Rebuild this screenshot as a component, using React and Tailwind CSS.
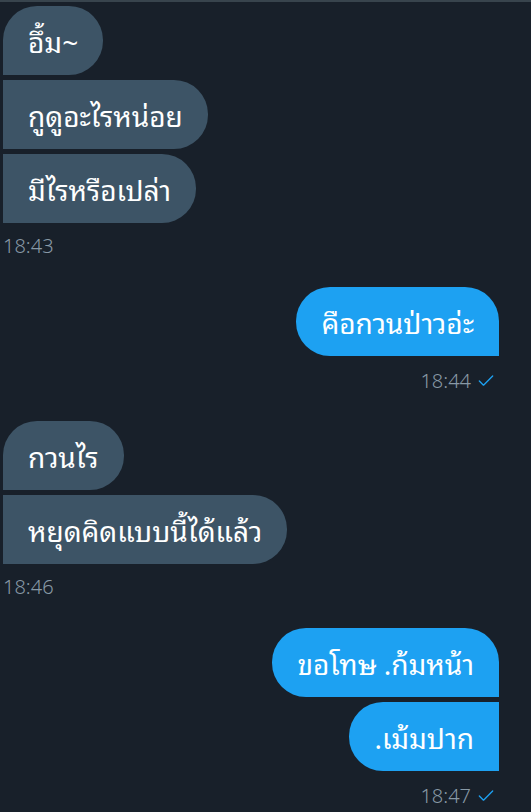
import { Check } from "lucide-react";

const font = {
  fontFamily:
    '"Noto Sans Thai Looped", "Loma", "Waree", "Garuda", "Noto Sans Thai", "Noto Sans", "DejaVu Sans", sans-serif',
};

function Bubble({ text, sent, shape }) {
  return (
    <div
      className={`flex h-[69px] items-center px-[25px] text-[28px] leading-none text-white ${
        sent ? "self-end bg-[#1da1f2]" : "self-start bg-[#3d5466]"
      } ${shape}`}
    >
      {text}
    </div>
  );
}

function Stamp({ time, sent }) {
  return (
    <div
      className={`flex h-6 items-center gap-[5px] text-[20px] font-light text-[#8899a6] ${
        sent ? "self-end pr-[3px]" : "self-start"
      }`}
      style={{ fontFamily: '"Noto Sans", sans-serif' }}
    >
      <span>{time}</span>
      {sent && <Check size={20} strokeWidth={1.6} className="text-[#1da1f2]" />}
    </div>
  );
}

export default function App() {
  return (
    <div
      className="min-h-[812px] w-[531px] border-t-2 border-[#38444d] bg-[#18202a] pl-[3px] pr-[32px] pt-[4px]"
      style={font}
    >
      <div className="flex flex-col gap-[5px]">
        <Bubble text="อึ้ม~" shape="rounded-tl-[34px] rounded-r-[34px]" />
        <Bubble text="กูดูอะไรหน่อย" shape="rounded-r-[34px]" />
        <Bubble text="มีไรหรือเปล่า" shape="rounded-r-[34px]" />
      </div>
      <div className="mt-[11px] flex flex-col">
        <Stamp time="18:43" />
      </div>

      <div className="mt-[29px] flex flex-col">
        <Bubble text="คือกวนป่าวอ่ะ" sent shape="rounded-l-[34px] rounded-tr-[34px]" />
      </div>
      <div className="mt-[13px] flex flex-col">
        <Stamp time="18:44" sent />
      </div>

      <div className="mt-[28px] flex flex-col gap-[5px]">
        <Bubble text="กวนไร" shape="rounded-tl-[34px] rounded-r-[34px]" />
        <Bubble text="หยุดคิดแบบนี้ได้แล้ว" shape="rounded-r-[34px]" />
      </div>
      <div className="mt-[11px] flex flex-col">
        <Stamp time="18:46" />
      </div>

      <div className="mt-[29px] flex flex-col gap-[5px]">
        <Bubble text="ขอโทษ .ก้มหน้า" sent shape="rounded-l-[34px] rounded-tr-[34px]" />
        <Bubble text=".เม้มปาก" sent shape="rounded-l-[34px]" />
      </div>
      <div className="mt-[13px] flex flex-col">
        <Stamp time="18:47" sent />
      </div>
    </div>
  );
}
